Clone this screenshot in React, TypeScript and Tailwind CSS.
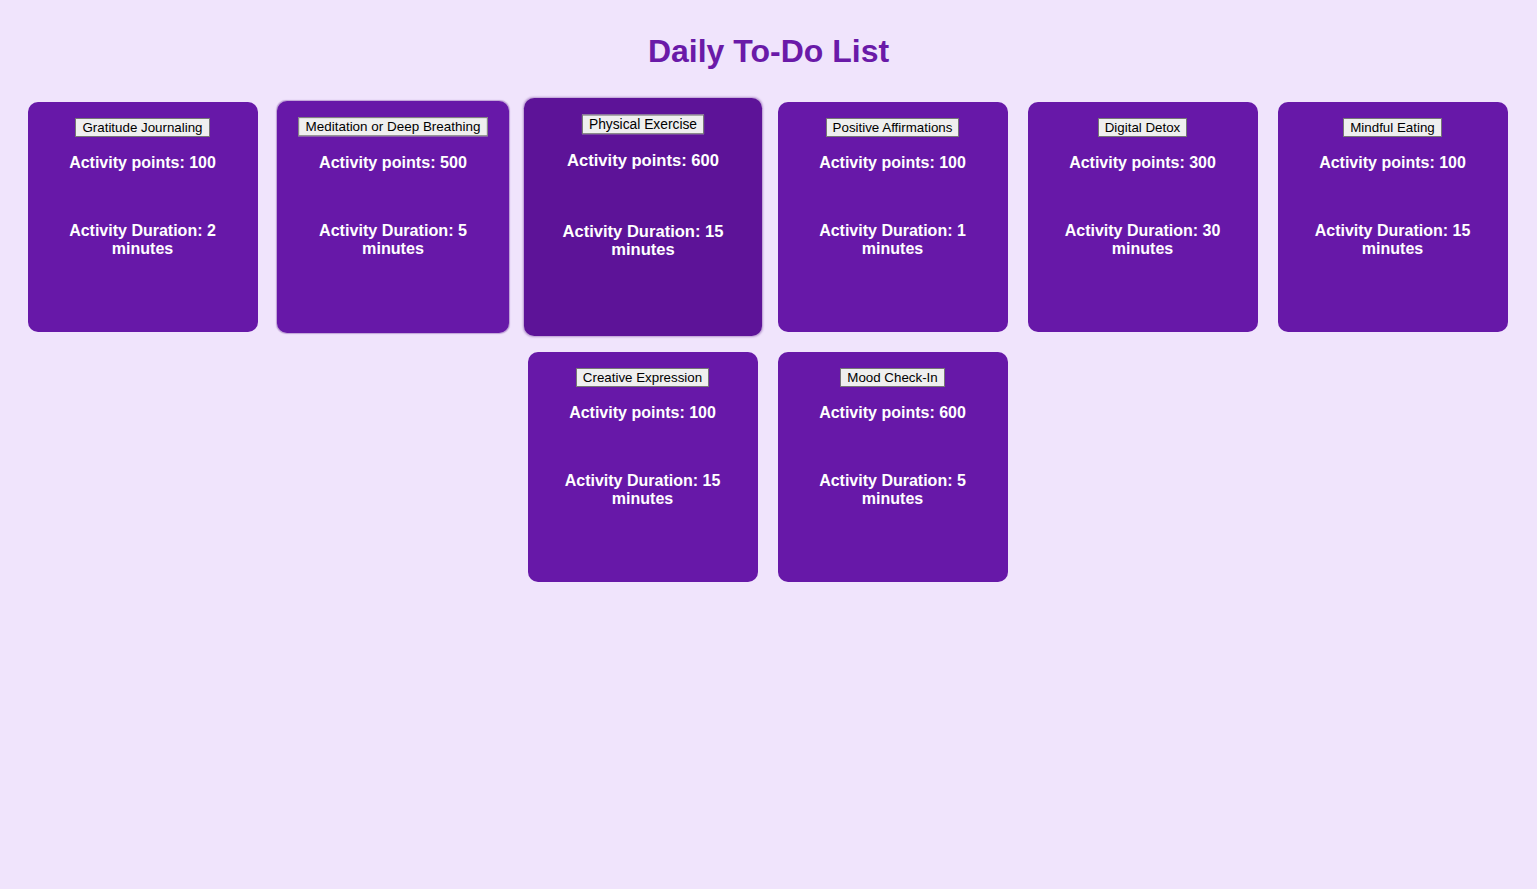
import React from "react";

type Item = { name: string; points: number; duration: number };

const items: Item[] = [
  { name: "Gratitude Journaling", points: 100, duration: 2 },
  { name: "Meditation or Deep Breathing", points: 500, duration: 5 },
  { name: "Physical Exercise", points: 600, duration: 15 },
  { name: "Positive Affirmations", points: 100, duration: 1 },
  { name: "Digital Detox", points: 300, duration: 30 },
  { name: "Mindful Eating", points: 100, duration: 15 },
  { name: "Creative Expression", points: 100, duration: 15 },
  { name: "Mood Check-In", points: 600, duration: 5 },
];

function Card({ item, index }: { item: Item; index: number }) {
  const variant =
    index === 2
      ? "bg-[#5d1398] scale-[1.035] shadow-[0_0_2px_rgba(80,10,130,0.35)]"
      : index === 1
      ? "bg-[#6718a8] scale-[1.009] shadow-[0_0_1px_rgba(80,10,130,0.3)]"
      : "bg-[#6718a8]";
  return (
    <div
      className={`w-[230px] h-[230px] rounded-[10px] px-4 pt-4 flex flex-col items-center text-center ${variant}`}
    >
      <button className="bg-[#efefef] border border-[#767676] px-[6px] py-[1px] text-[13.33px] leading-[15px] text-black font-['Liberation_Sans',Arial,sans-serif]">
        {item.name}
      </button>
      <p className="mt-[17px] text-[16px] leading-[18px] font-bold text-white">
        Activity points: {item.points}
      </p>
      <p className="mt-[50px] text-[16px] leading-[18px] font-bold text-white">
        Activity Duration: {item.duration} minutes
      </p>
    </div>
  );
}

export default function App() {
  return (
    <div className="min-h-[889px] w-full bg-[#f0e4fc] font-['Liberation_Sans',Arial,sans-serif] pt-[33px]">
      <h1 className="text-center text-[32px] leading-[37px] font-bold text-[#6a1aa8]">
        Daily To-Do List
      </h1>
      <div className="mt-[32px] flex flex-wrap justify-center gap-5 pl-[27px] pr-[29px]">
        {items.map((it, i) => (
          <Card key={it.name} item={it} index={i} />
        ))}
      </div>
    </div>
  );
}
